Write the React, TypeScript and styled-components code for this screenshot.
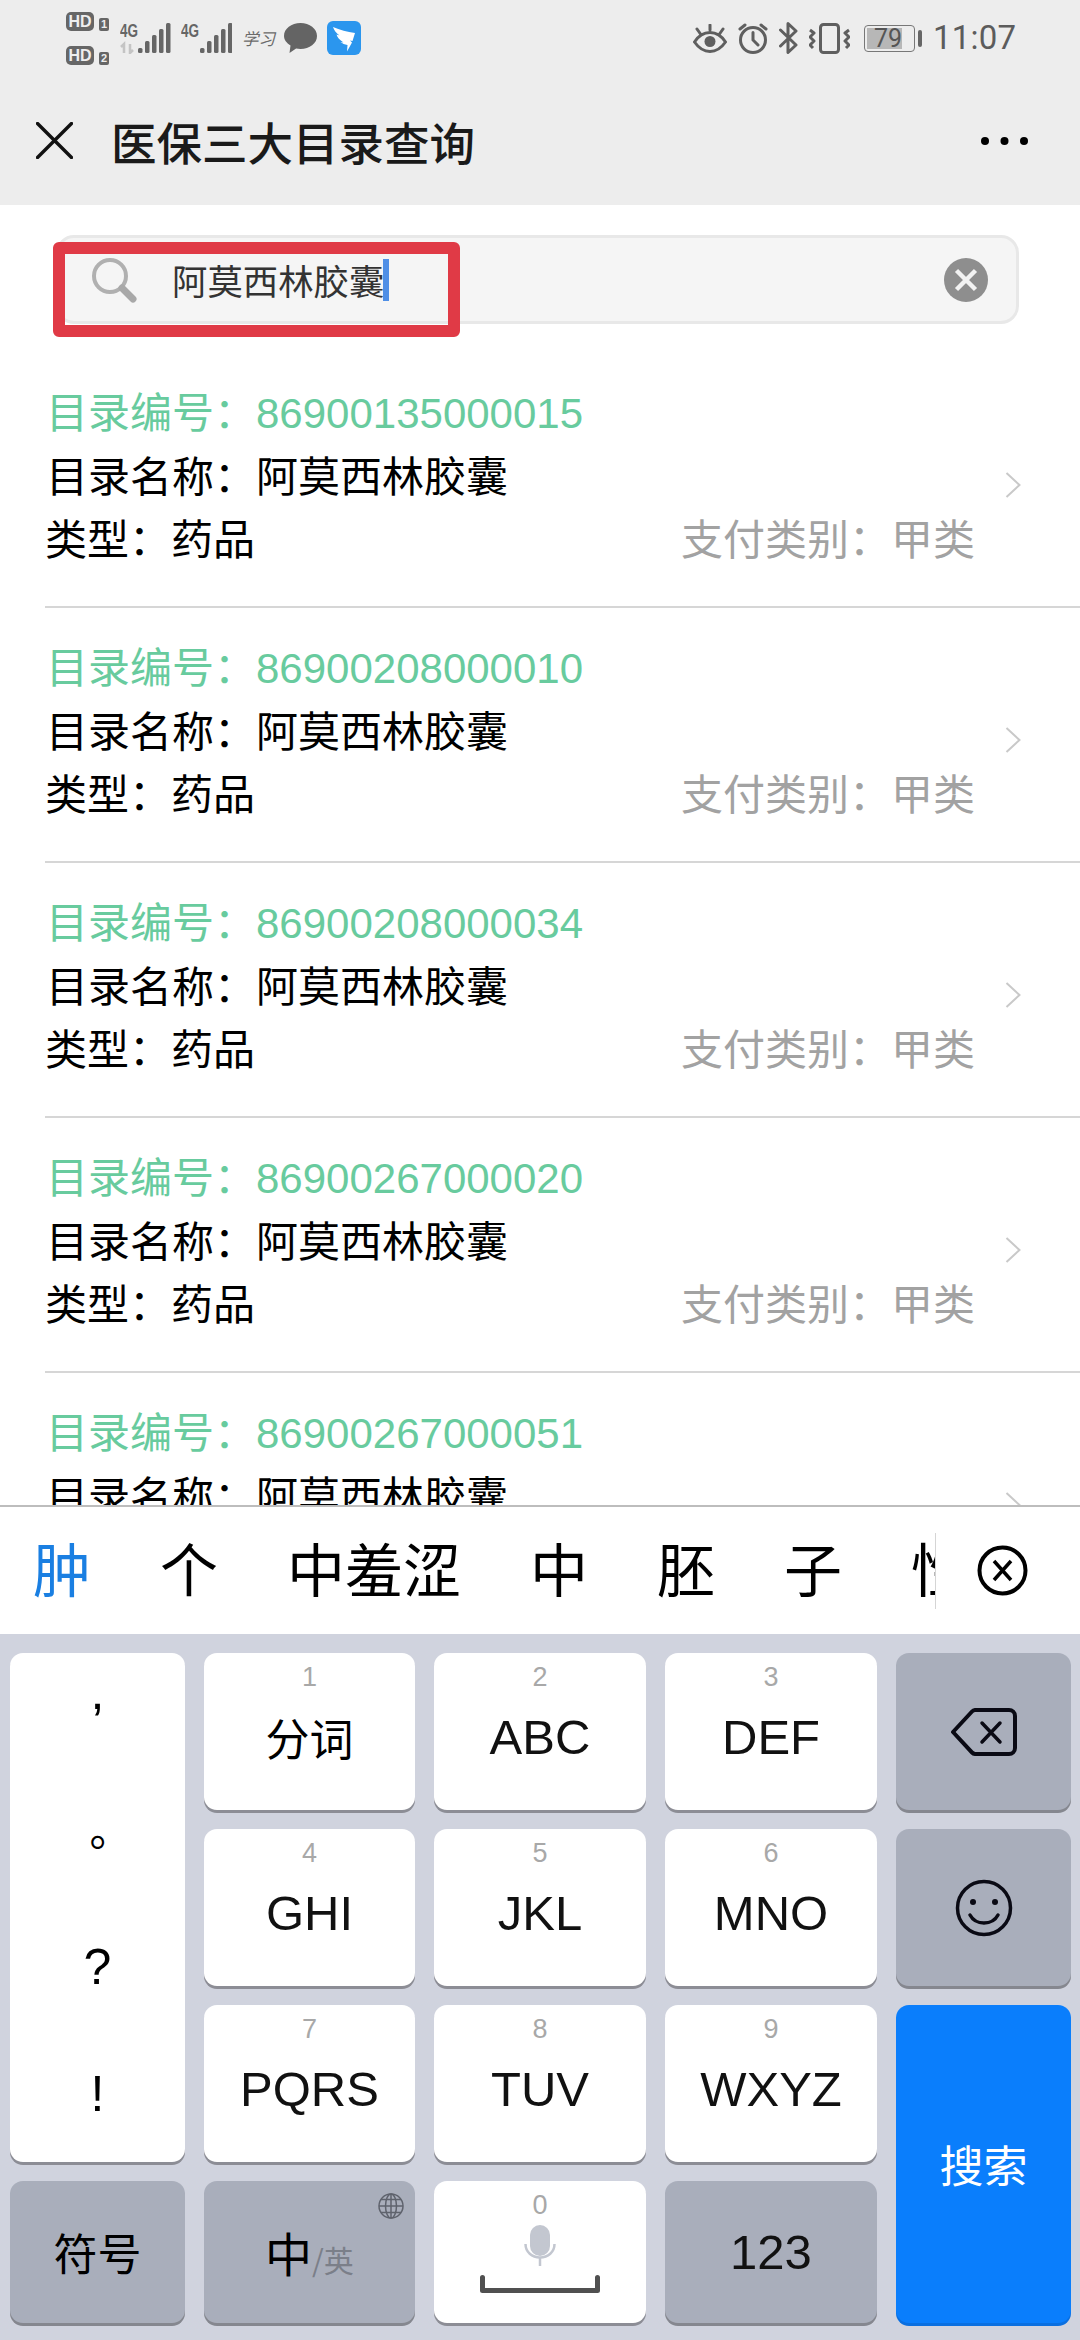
import React from "react";
import styled, { createGlobalStyle } from "styled-components";

const SANS = `"Liberation Sans", "Noto Sans CJK SC", sans-serif`;

const Global = createGlobalStyle`
  html, body { margin: 0; padding: 0; background: #fff; }
  * { box-sizing: border-box; }
`;

const Page = styled.div`
  width: 1080px;
  height: 2340px;
  display: flex;
  flex-direction: column;
  overflow: hidden;
  font-family: ${SANS};
  background: #fff;
`;

const Header = styled.header`
  height: 205px;
  flex: none;
  background: #ededed;
`;

const StatusBar = styled.div`
  height: 76px;
  padding: 0 67px 0 66px;
  display: flex;
  align-items: center;
  justify-content: space-between;
  color: #5f5f5f;
`;

const StatusGroup = styled.div<{ $gap: number }>`
  display: flex;
  align-items: center;
  gap: ${(p) => p.$gap}px;
`;

const SimColumn = styled.div`
  width: 44px;
  display: flex;
  flex-direction: column;
  gap: 14px;
`;

const SimRow = styled.div`
  height: 20px;
  display: flex;
  align-items: flex-end;
  gap: 5px;
`;

const HdBadge = styled.span`
  width: 28px;
  height: 19px;
  border-radius: 5px;
  background: #666;
  color: #eee;
  font: 700 16px/19px ${SANS};
  text-align: center;
`;

const SimNumber = styled.span`
  width: 10px;
  height: 13px;
  border-radius: 2px;
  background: #666;
  color: #eee;
  font: 700 11px/13px ${SANS};
  text-align: center;
`;

const Study = styled.span`
  width: 32px;
  font: italic 400 16.5px/22px "Noto Sans CJK SC", sans-serif;
  color: #6a6a6a;
  white-space: nowrap;
`;

const Battery = styled.div`
  margin-left: 3px;
  display: flex;
  align-items: center;
  gap: 3px;
`;

const BatteryShell = styled.div`
  width: 51px;
  height: 27px;
  padding: 2px 0 2px 2px;
  border: 1.5px solid #777;
  border-radius: 4px;
  display: flex;
`;

const BatteryFill = styled.div`
  width: 35px;
  background: #b7b7b7;
  font: 400 25px/21px "Roboto", sans-serif;
  color: #555;
  text-align: right;
  white-space: nowrap;
`;

const BatteryNub = styled.div`
  width: 4px;
  height: 17px;
  border-radius: 2px;
  background: #666;
`;

const Clock = styled.span`
  width: 80px;
  font: 400 33px/40px "Roboto", sans-serif;
  color: #5c5c5c;
  letter-spacing: 0.2px;
  white-space: nowrap;
`;

const NavBar = styled.div`
  height: 129px;
  padding: 0 52px 0 36px;
  display: flex;
  align-items: center;
`;

const NavTitle = styled.h1`
  margin: 0 0 0 38px;
  flex: 1;
  font: 500 45.5px/60px "Noto Sans CJK SC", sans-serif;
  color: #1a1a1a;
  white-space: nowrap;
`;

const SearchArea = styled.div`
  height: 148px;
  flex: none;
  padding: 30px 61px 0 56px;
`;

const SearchBox = styled.div`
  position: relative;
  height: 89px;
  padding: 0 28px 0 32px;
  border: 3px solid #e8e8e8;
  border-radius: 18px;
  background: #f5f5f5;
  display: flex;
  align-items: center;
`;

const SearchText = styled.span`
  margin-left: 35px;
  flex: 1;
  display: flex;
  align-items: center;
  font: 400 35.4px/46px "Noto Sans CJK SC", sans-serif;
  color: #333;
`;

const Caret = styled.i`
  width: 6px;
  height: 42px;
  margin-left: -1px;
  background: #4f8fe6;
`;

const RedFrame = styled.div`
  position: absolute;
  left: -6px;
  top: 4px;
  width: 407px;
  height: 95px;
  border: 12px solid #e03a46;
  border-radius: 6px;
`;

const List = styled.main`
  flex: 1;
  min-height: 0;
  overflow: hidden;
`;

const Item = styled.article`
  height: 255px;
  margin-left: 45px;
  padding: 29px 59px 19px 0;
  border-bottom: 2px solid #d6d6d6;
  display: flex;
  align-items: center;
  gap: 30px;
`;

const ItemBody = styled.div`
  flex: 1;
  align-self: flex-start;
`;

const Row = styled.div<{ $tone?: "green" | "black" }>`
  height: 63.5px;
  display: flex;
  justify-content: space-between;
  align-items: center;
  padding-left: ${(p) => (p.$tone ? 1 : 0)}px;
  font-size: 42px;
  line-height: 63px;
  color: ${(p) => (p.$tone === "green" ? "#68cb9e" : "#000")};
  white-space: nowrap;
`;

const PayType = styled.span`
  color: #a2a2a2;
`;

const Candidates = styled.div`
  height: 129px;
  flex: none;
  border-top: 2px solid #bdbdbd;
  background: #fff;
  display: flex;
  align-items: center;
`;

const CandidateClip = styled.div`
  width: 935px;
  flex: none;
  margin-bottom: 8px;
  padding-left: 33px;
  display: flex;
  gap: 69px;
  overflow: hidden;
`;

const Candidate = styled.span<{ $active?: boolean }>`
  flex: none;
  font: 400 58px/76px "Noto Sans CJK SC", sans-serif;
  color: ${(p) => (p.$active ? "#1a7fe2" : "#000")};
`;

const CandidateDivider = styled.i`
  width: 1px;
  height: 76px;
  flex: none;
  background: #d5d5d5;
`;

const Keyboard = styled.div`
  height: 706px;
  flex: none;
  padding: 19px 9px 0 10px;
  background: #d0d3de;
  display: grid;
  grid-template-columns: 175px 211px 212px 212px 175px;
  grid-template-rows: 157px 157px 157px 142px;
  gap: 19px;
`;

const toneBg = { light: "#fff", dark: "#a9aebb", blue: "#0a7efc" };
const toneShadow = { light: "#8c8d95", dark: "#85878f", blue: "#0a6fe0" };

const Key = styled.div<{ $tone: "light" | "dark" | "blue"; $row?: string; $col?: string }>`
  position: relative;
  grid-row: ${(p) => p.$row || "auto"};
  grid-column: ${(p) => p.$col || "auto"};
  border-radius: 13px;
  background: ${(p) => toneBg[p.$tone]};
  box-shadow: 0 3px 0 ${(p) => toneShadow[p.$tone]};
  display: flex;
  flex-direction: column;
  align-items: center;
  color: ${(p) => (p.$tone === "blue" ? "#fff" : "#000")};
`;

const CenterKey = styled(Key)`
  justify-content: center;
`;

const Digit = styled.span`
  margin-top: 9px;
  font: 300 27px/30px ${SANS};
  color: #a8a8a8;
`;

const Label = styled.span`
  margin-top: 15px;
  font-size: 49px;
  line-height: 60px;
  color: #111;
  white-space: nowrap;
`;

const CnLabel = styled.span`
  font: 400 44px/60px "Noto Sans CJK SC", sans-serif;
  white-space: nowrap;
`;

const CnKeyLabel = styled(CnLabel)`
  margin-top: 15px;
`;

const LangMain = styled(CnLabel)`
  font-size: 47px;
`;

const LatinLabel = styled.span`
  font-size: 49px;
  line-height: 60px;
  color: #111;
`;

const Mark = styled.span<{ $x: number; $y: number; $size: number }>`
  height: 127px;
  width: 100%;
  display: flex;
  align-items: center;
  justify-content: center;
  font-size: ${(p) => p.$size}px;
  line-height: 60px;
  transform: translate(${(p) => p.$x}px, ${(p) => p.$y}px);
`;

const LangLabel = styled.div`
  display: flex;
  align-items: baseline;
`;

const LangAlt = styled.span`
  font: 400 30px/40px "Noto Sans CJK SC", sans-serif;
  color: #7b7f89;
`;

const GlobeSlot = styled.span`
  position: absolute;
  top: 12px;
  right: 11px;
  line-height: 0;
`;

const MicSlot = styled.span`
  margin-top: 5px;
  line-height: 0;
`;

const SpaceSlot = styled.span`
  margin-top: 9px;
  line-height: 0;
`;

const items = [
  "86900135000015",
  "86900208000010",
  "86900208000034",
  "86900267000020",
  "86900267000051",
];

const Signal = ({ up }: { up?: boolean }) => (
  <svg width="51" height="32" viewBox="0 0 51 32">
    <text x="0" y="15" fontFamily="Liberation Sans" fontWeight="700" fontSize="17.5" fill="#666" textLength="18" lengthAdjust="spacingAndGlyphs">
      4G
    </text>
    {up && (
      <path d="M4 31V22M1 25l3-3v9M10 22v9l3-3" fill="none" stroke="#c4c4c4" strokeWidth="2.5" />
    )}
    {[5, 12, 18, 24, 30].map((h, i) => (
      <rect key={i} x={up ? 18 + i * 7 : 19 + i * 7} y={31 - h} width="4.5" height={h} rx="1.5" fill="#666" />
    ))}
  </svg>
);

const Bubble = () => (
  <svg width="33" height="30" viewBox="0 0 33 30">
    <path d="M16.5 0C25.6 0 33 5.6 33 13s-7.4 13-16.5 13c-1.5 0-3-.2-4.4-.5L5.5 30l1-7.6C2.5 20 0 16.7 0 13 0 5.6 7.4 0 16.5 0Z" fill="#646464" />
  </svg>
);

const DingApp = () => (
  <svg width="34" height="34" viewBox="0 0 34 34">
    <rect width="34" height="34" rx="6" fill="#2b96ee" />
    <path d="M6 6c7 3 14 5 22 6l-2.5 8-2.5-.5 2 2-5 9 .5-6.5c-3-.5-5-1.5-7-3l3 .5c-4-2.5-6-5-7-8l3 1C9 12 7 9 6 6Z" fill="#fff" />
  </svg>
);

const Eye = () => (
  <svg width="34" height="29" viewBox="0 0 34 29" fill="none" stroke="#5f5f5f" strokeWidth="3" strokeLinecap="round">
    <path d="M1.5 18C6 11 11 8.500 17 8.500S28 11 32.5 18C28 24.500 23 27.500 17 27.500S6 24.500 1.5 18Z" />
    <circle cx="17" cy="17.5" r="5.5" fill="#5f5f5f" stroke="none" />
    <path d="M17 1v5M4 5l3.5 5M30 5l-3.5 5" />
  </svg>
);

const Alarm = () => (
  <svg width="30" height="31" viewBox="0 0 30 31" fill="none" stroke="#5f5f5f" strokeWidth="3" strokeLinecap="round">
    <circle cx="15" cy="17" r="12.5" />
    <path d="M15 9.5V17l5 5M2 6l5-4M28 6l-5-4" />
  </svg>
);

const Bluetooth = () => (
  <svg width="19" height="32" viewBox="0 0 19 32" fill="none" stroke="#5f5f5f" strokeWidth="3" strokeLinecap="round" strokeLinejoin="round">
    <path d="M1.5 8 17 23 9 30.5V1.5L17 9 1.5 24" />
  </svg>
);

const Vibrate = () => (
  <svg width="41" height="31" viewBox="0 0 41 31" fill="none" stroke="#5f5f5f" strokeWidth="3" strokeLinejoin="round">
    <rect x="11.5" y="1.5" width="18" height="28" rx="3" />
    <path d="M1 7l4 3-4 4 4 4-4 4 3 3M40 7l-4 3 4 4-4 4 4 4-3 3" />
  </svg>
);

const CloseIcon = () => (
  <svg width="37" height="37" viewBox="0 0 37 37" stroke="#111" strokeWidth="3.4" strokeLinecap="round">
    <path d="M1.5 1.5l34 34M35.5 1.5l-34 34" />
  </svg>
);

const Dots = () => (
  <svg width="47" height="8" viewBox="0 0 47 8" fill="#000">
    <circle cx="4" cy="4" r="4" />
    <circle cx="23.5" cy="4" r="4" />
    <circle cx="43" cy="4" r="4" />
  </svg>
);

const SearchIcon = () => (
  <svg width="46" height="46" viewBox="0 0 46 46" fill="none">
    <circle cx="19" cy="19" r="16" stroke="#b0b0b0" strokeWidth="4" />
    <path d="M31 31l11 11" stroke="#a8a8a8" strokeWidth="7" strokeLinecap="round" />
  </svg>
);

const ClearIcon = () => (
  <svg width="44" height="44" viewBox="0 0 44 44">
    <circle cx="22" cy="22" r="22" fill="#8e8e8e" />
    <path d="M12.5 12.5l19 19M31.5 12.5l-19 19" stroke="#f2f2f2" strokeWidth="4.5" />
  </svg>
);

const Chevron = () => (
  <svg width="16" height="26" viewBox="0 0 16 26" fill="none" stroke="#c9c9c9" strokeWidth="2" style={{ flex: "none" }}>
    <path d="M1.5 1l13 12-13 12" />
  </svg>
);

const DismissIcon = () => (
  <svg width="51" height="51" viewBox="0 0 51 51" fill="none" stroke="#000" strokeWidth="4" style={{ marginLeft: 41, flex: "none" }}>
    <circle cx="25.5" cy="25.5" r="23" />
    <path d="M17 16l17 19M34 16L17 35" strokeWidth="3.5" />
  </svg>
);

const Backspace = () => (
  <svg width="66" height="48" viewBox="0 0 66 48" fill="none" stroke="#0a0a14" strokeWidth="4" strokeLinejoin="round" strokeLinecap="round">
    <path d="M2 24L21 3.5a5 5 0 0 1 3-1.5h34a6 6 0 0 1 6 6v32a6 6 0 0 1-6 6H24a5 5 0 0 1-3-1.5Z" />
    <path d="M31 15l18 19M49 15L31 34" strokeWidth="3.5" />
  </svg>
);

const Smile = () => (
  <svg width="58" height="58" viewBox="0 0 58 58" fill="none" stroke="#0a0a14" strokeWidth="3.5" strokeLinecap="round">
    <circle cx="29" cy="29" r="26.5" />
    <circle cx="18" cy="23" r="3" fill="#0a0a14" stroke="none" />
    <circle cx="40" cy="23" r="3" fill="#0a0a14" stroke="none" />
    <path d="M15 36c3 5.5 8 8 14 8s11-2.500 14-8" />
  </svg>
);

const Globe = () => (
  <svg width="26" height="26" viewBox="0 0 26 26" fill="none" stroke="#5f636d" strokeWidth="1.5">
    <circle cx="13" cy="13" r="12" />
    <ellipse cx="13" cy="13" rx="5.5" ry="12" />
    <path d="M13 1v24M1 13h24M3 6.5h20M3 19.5h20" />
  </svg>
);

const Mic = () => (
  <svg width="32" height="41" viewBox="0 0 32 41" fill="none">
    <rect x="6" y="0" width="20" height="31" rx="10" fill="#c3c7d0" />
    <path d="M1.5 19c0 8 6.5 13.500 14.500 13.500S30.500 27 30.500 19" stroke="#c3c7d0" strokeWidth="2.5" />
    <path d="M16 32v9" stroke="#c3c7d0" strokeWidth="2.5" />
  </svg>
);

const SpaceBar = () => (
  <svg width="120" height="18" viewBox="0 0 120 18" fill="none" stroke="#505050" strokeWidth="5" strokeLinecap="round" strokeLinejoin="round">
    <path d="M2.5 2.5v13h115v-13" />
  </svg>
);

const letterKeys: [string, string, boolean][] = [
  ["1", "分词", true],
  ["2", "ABC", false],
  ["3", "DEF", false],
];
const midKeys: [string, string][] = [
  ["4", "GHI"],
  ["5", "JKL"],
  ["6", "MNO"],
];
const lowKeys: [string, string][] = [
  ["7", "PQRS"],
  ["8", "TUV"],
  ["9", "WXYZ"],
];

export default function App() {
  return (
    <Page>
      <Global />
      <Header>
        <StatusBar>
          <StatusGroup $gap={10}>
            <SimColumn>
              <SimRow>
                <HdBadge>HD</HdBadge>
                <SimNumber>1</SimNumber>
              </SimRow>
              <SimRow>
                <HdBadge>HD</HdBadge>
                <SimNumber>2</SimNumber>
              </SimRow>
            </SimColumn>
            <Signal up />
            <Signal />
            <Study>学习</Study>
            <Bubble />
            <DingApp />
          </StatusGroup>
          <StatusGroup $gap={11}>
            <Eye />
            <Alarm />
            <Bluetooth />
            <Vibrate />
            <Battery>
              <BatteryShell>
                <BatteryFill>79</BatteryFill>
              </BatteryShell>
              <BatteryNub />
            </Battery>
            <Clock>11:07</Clock>
          </StatusGroup>
        </StatusBar>
        <NavBar>
          <CloseIcon />
          <NavTitle>医保三大目录查询</NavTitle>
          <Dots />
        </NavBar>
      </Header>

      <SearchArea>
        <SearchBox>
          <SearchIcon />
          <SearchText>
            阿莫西林胶囊
            <Caret />
          </SearchText>
          <ClearIcon />
          <RedFrame />
        </SearchBox>
      </SearchArea>

      <List>
        {items.map((code) => (
          <Item key={code}>
            <ItemBody>
              <Row $tone="green">目录编号：{code}</Row>
              <Row $tone="black">目录名称：阿莫西林胶囊</Row>
              <Row>
                <span>类型：药品</span>
                <PayType>支付类别：甲类</PayType>
              </Row>
            </ItemBody>
            <Chevron />
          </Item>
        ))}
      </List>

      <Candidates>
        <CandidateClip>
          <Candidate $active>肿</Candidate>
          <Candidate>个</Candidate>
          <Candidate>中羞涩</Candidate>
          <Candidate>中</Candidate>
          <Candidate>胚</Candidate>
          <Candidate>子</Candidate>
          <Candidate>性</Candidate>
        </CandidateClip>
        <CandidateDivider />
        <DismissIcon />
      </Candidates>

      <Keyboard>
        <Key $tone="light" $row="1 / 4" $col="1">
          <Mark $x={0} $y={-25} $size={50}>,</Mark>
          <Mark $x={13} $y={-12} $size={42}>。</Mark>
          <Mark $x={0} $y={-4} $size={50}>?</Mark>
          <Mark $x={0} $y={-4} $size={50}>!</Mark>
        </Key>
        {letterKeys.map(([d, t, cn]) => (
          <Key key={d} $tone="light">
            <Digit>{d}</Digit>
            {cn ? <CnKeyLabel>{t}</CnKeyLabel> : <Label>{t}</Label>}
          </Key>
        ))}
        <CenterKey $tone="dark">
          <Backspace />
        </CenterKey>
        {midKeys.map(([d, t]) => (
          <Key key={d} $tone="light">
            <Digit>{d}</Digit>
            <Label>{t}</Label>
          </Key>
        ))}
        <CenterKey $tone="dark">
          <Smile />
        </CenterKey>
        {lowKeys.map(([d, t]) => (
          <Key key={d} $tone="light">
            <Digit>{d}</Digit>
            <Label>{t}</Label>
          </Key>
        ))}
        <CenterKey $tone="blue" $row="3 / 5" $col="5">
          <CnLabel>搜索</CnLabel>
        </CenterKey>
        <CenterKey $tone="dark" $row="4" $col="1">
          <CnLabel>符号</CnLabel>
        </CenterKey>
        <CenterKey $tone="dark" $row="4" $col="2">
          <GlobeSlot>
            <Globe />
          </GlobeSlot>
          <LangLabel>
            <LangMain>中</LangMain>
            <LangAlt>/英</LangAlt>
          </LangLabel>
        </CenterKey>
        <Key $tone="light" $row="4" $col="3">
          <Digit>0</Digit>
          <MicSlot>
            <Mic />
          </MicSlot>
          <SpaceSlot>
            <SpaceBar />
          </SpaceSlot>
        </Key>
        <CenterKey $tone="dark" $row="4" $col="4">
          <LatinLabel>123</LatinLabel>
        </CenterKey>
      </Keyboard>
    </Page>
  );
}
